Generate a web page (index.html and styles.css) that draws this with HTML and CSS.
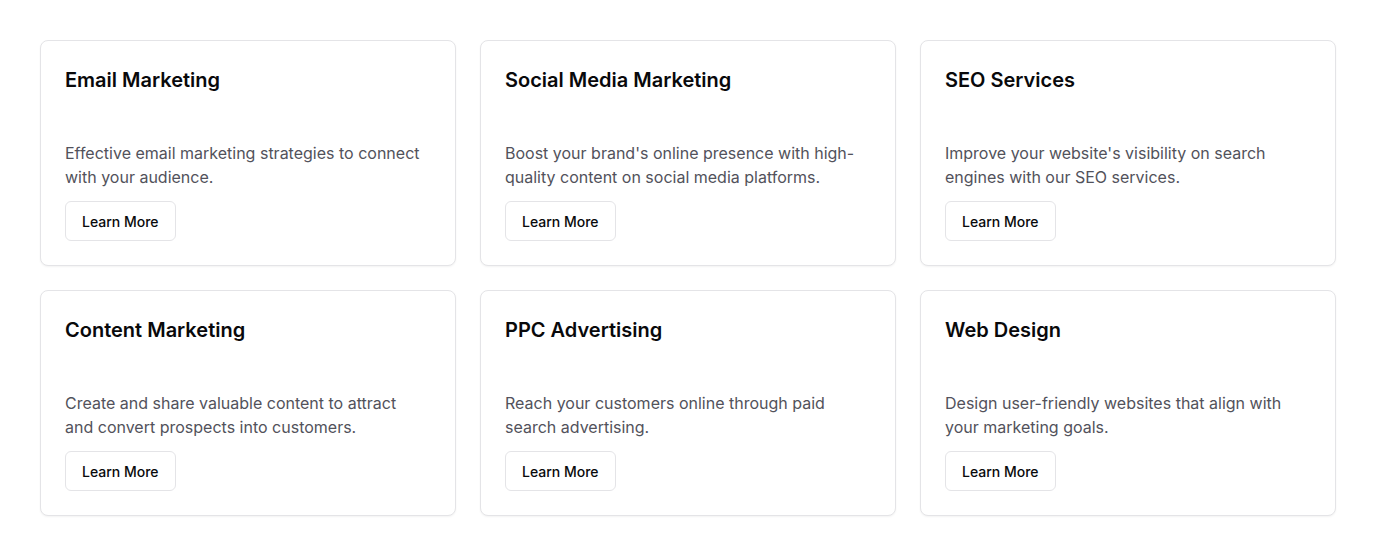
FILE: index.html
```html
<!DOCTYPE html>
<html lang="en">
<head>
<meta charset="utf-8">
<link rel="stylesheet" href="styles.css">
</head>
<body>
<main class="grid">
  <div class="card">
    <h3 class="title">Email Marketing</h3>
    <p class="desc">Effective email marketing strategies to connect with your audience.</p>
    <button class="btn">Learn More</button>
  </div>
  <div class="card">
    <h3 class="title">Social Media Marketing</h3>
    <p class="desc">Boost your brand's online presence with high-quality content on social media platforms.</p>
    <button class="btn">Learn More</button>
  </div>
  <div class="card">
    <h3 class="title">SEO Services</h3>
    <p class="desc">Improve your website's visibility on search engines with our SEO services.</p>
    <button class="btn">Learn More</button>
  </div>
  <div class="card">
    <h3 class="title">Content Marketing</h3>
    <p class="desc">Create and share valuable content to attract and convert prospects into customers.</p>
    <button class="btn">Learn More</button>
  </div>
  <div class="card">
    <h3 class="title">PPC Advertising</h3>
    <p class="desc">Reach your customers online through paid search advertising.</p>
    <button class="btn">Learn More</button>
  </div>
  <div class="card">
    <h3 class="title">Web Design</h3>
    <p class="desc">Design user-friendly websites that align with your marketing goals.</p>
    <button class="btn">Learn More</button>
  </div>
</main>
</body>
</html>
```
FILE: styles.css
```css
* { box-sizing: border-box; }
html, body { margin: 0; padding: 0; background: #fff; }
body { font-family: Inter, "Noto Sans", sans-serif; color: #09090b; }
.grid {
  display: grid;
  grid-template-columns: repeat(3, 416px);
  gap: 24px;
  padding: 40px;
}
.card {
  border: 1px solid #e4e4e7;
  border-radius: 8px;
  background: #fff;
  box-shadow: 0 1px 2px rgba(0,0,0,0.05);
  padding: 24px;
  display: flex;
  flex-direction: column;
  align-items: flex-start;
}
.title {
  margin: 1px 0 0;
  font-size: 20px;
  line-height: 28px;
  font-weight: 600;
}
.desc {
  margin: 47px 0 12px;
  max-width: 360px;
  font-size: 16px;
  line-height: 24px;
  color: #52525b;
}
.btn {
  height: 40px;
  padding: 0 16px;
  border: 1px solid #e4e4e7;
  border-radius: 6px;
  background: #fff;
  font-family: inherit;
  font-size: 14px;
  font-weight: 500;
  color: #09090b;
}
```
